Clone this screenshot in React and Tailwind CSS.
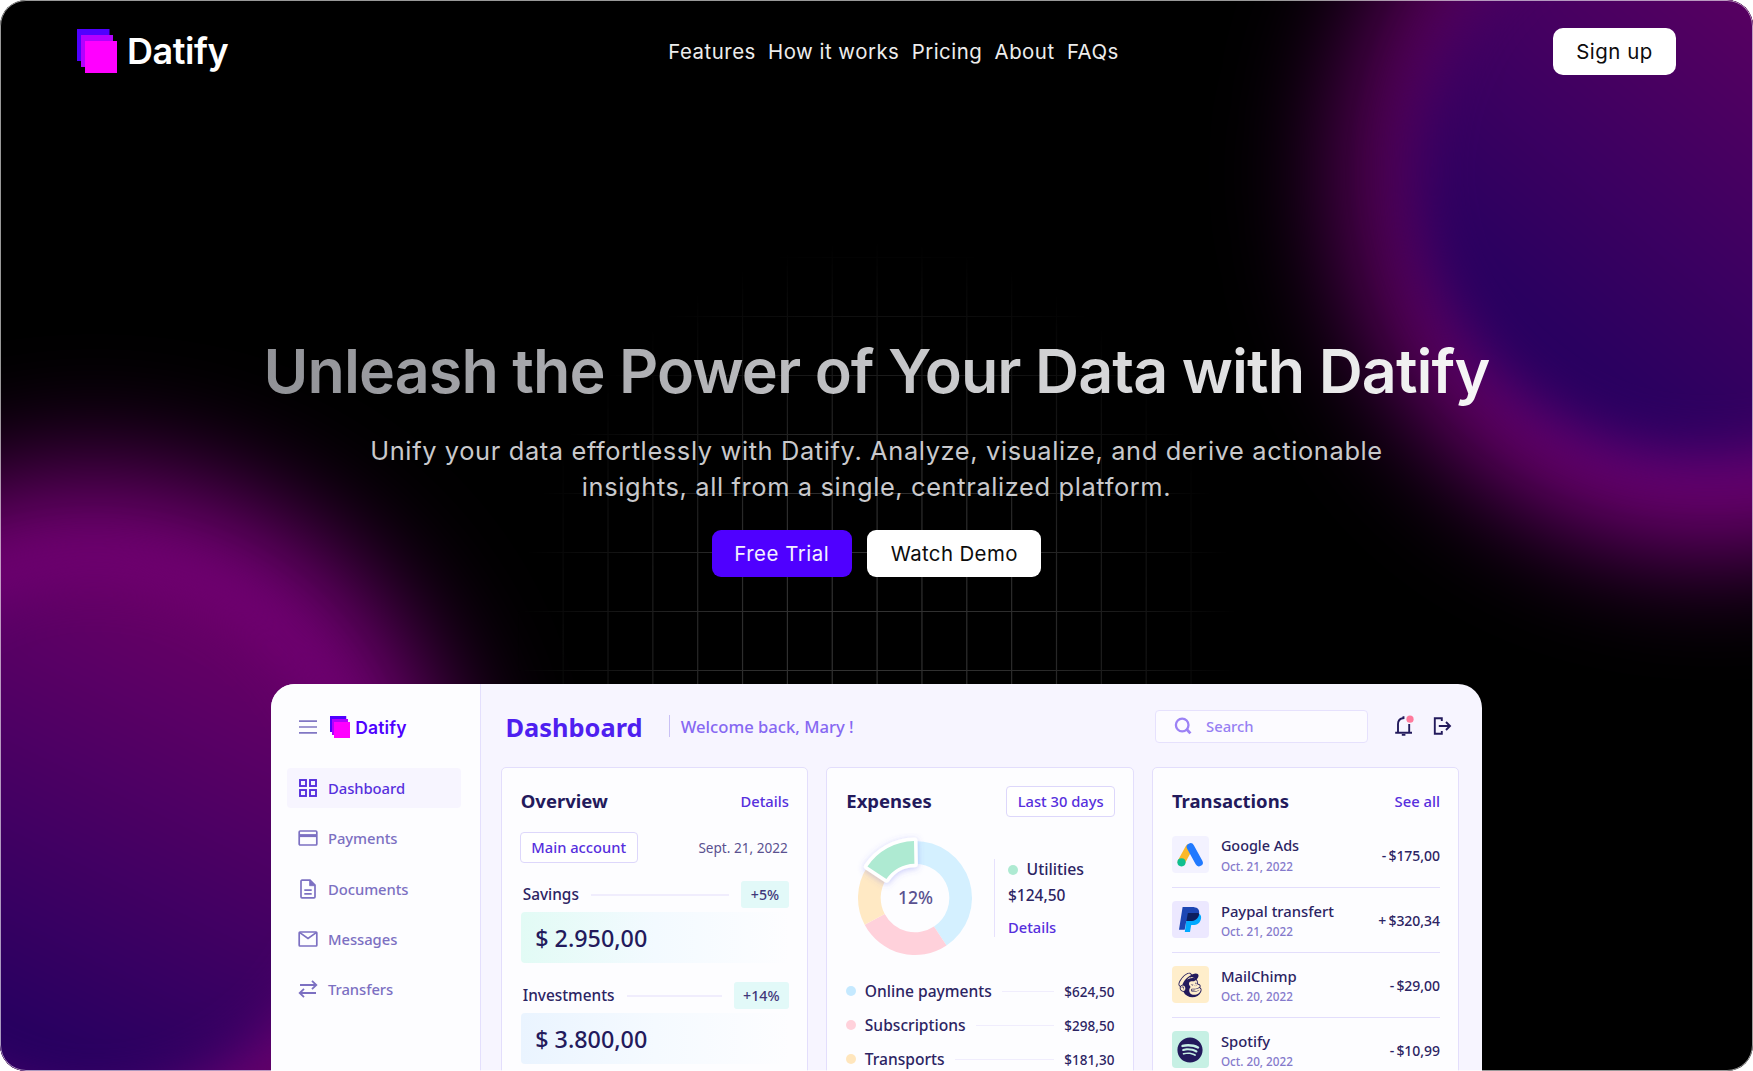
import React from "react";
import { FaMailchimp, FaSpotify } from "react-icons/fa";

const sans = "font-['Inter',sans-serif]";
const noto = "font-['Noto_Sans',sans-serif]";

function Logo({ small }) {
  return (
    <svg
      className={small ? "h-[22px] w-[20px] shrink-0" : "h-[44px] w-[40px] shrink-0"}
      viewBox="0 0 40 44"
    >
      <rect x="0" y="0" width="32.5" height="32" fill="#5000ff" />
      <rect x="4" y="6" width="32" height="32" fill="#b400ff" />
      <rect x="8" y="12" width="32" height="32" fill="#ff00ff" />
    </svg>
  );
}

function Glows() {
  return (
    <div className="pointer-events-none absolute inset-0 overflow-hidden">
      <div className="absolute left-[1332px] top-[-212px] h-[768px] w-[764px] rounded-full bg-linear-to-b from-[#580059] via-[#5c0060] via-60% to-[#7a0080] blur-[56px]" />
      <div className="absolute left-[1412px] top-[-114px] h-[572px] w-[590px] rounded-full bg-linear-[40deg] from-[#280060] from-22% to-[#640062] to-82% blur-[28px]" />
      <div className="absolute left-[-272px] top-[467px] h-[734px] w-[734px] rounded-full bg-[#760078] blur-[60px]" />
      <div className="absolute left-[-175px] top-[568px] h-[540px] w-[536px] rounded-full bg-linear-[26deg] from-[#240060] from-18% to-[#680066] to-85% blur-[28px]" />
    </div>
  );
}

const gridX = Array.from({ length: 17 }, (_, i) => 518.3 + i * 44.85);
const gridY = [257.5, 316.5, 375.5, 434.5, 493.5, 552.5, 611.5, 670.5];

function Grid() {
  return (
    <svg className="pointer-events-none absolute inset-0 h-full w-full" viewBox="0 0 1753 1071">
      <defs>
        <radialGradient id="gridFade" gradientUnits="userSpaceOnUse" cx="0" cy="0" r="1" gradientTransform="translate(877 640) scale(360 400)">
          <stop offset="0" stopColor="#fff" />
          <stop offset="0.45" stopColor="#fff" stopOpacity="0.85" />
          <stop offset="1" stopColor="#fff" stopOpacity="0" />
        </radialGradient>
        <mask id="gridMask">
          <rect width="1753" height="1071" fill="url(#gridFade)" />
        </mask>
      </defs>
      <g mask="url(#gridMask)" stroke="#333333" strokeWidth="1.2">
        {gridX.map((x) => (
          <line key={x} x1={x} x2={x} y1="230" y2="690" />
        ))}
        {gridY.map((y) => (
          <line key={y} y1={y} y2={y} x1="480" x2="1270" />
        ))}
      </g>
    </svg>
  );
}

function Header() {
  return (
    <header className="flex h-[75.3px] items-end pl-[77.3px] pr-[77px]">
      <div className="flex h-[47px] w-[591px] items-start pt-px">
        <Logo />
        <span className="ml-[9.800px] text-[36px] font-semibold leading-[44px] tracking-[-0.500px] text-white">
          Datify
        </span>
      </div>
      <nav className="flex h-[47px] items-center gap-[12.300px] whitespace-nowrap pt-px text-[20.400px] tracking-[0.500px] text-[#ededed]">
        <a>Features</a>
        <a>How it works</a>
        <a>Pricing</a>
        <a>About</a>
        <a>FAQs</a>
      </nav>
      <button className="ml-auto h-[47px] w-[123px] rounded-[10px] bg-white pt-px text-[20.400px] tracking-[0.550px] text-[#0c0c0c]">
        Sign up
      </button>
    </header>
  );
}

function Hero() {
  return (
    <section className="flex flex-col items-center whitespace-nowrap pt-[258.700px]">
      <h1 className="bg-linear-to-r from-[#919297] to-[#f7f7f7] bg-clip-text text-[61px] font-semibold leading-[74px] tracking-[-0.920px] text-transparent">
        Unleash the Power of Your Data with Datify
      </h1>
      <p className="mt-[25px] text-center text-[25.400px] leading-[36px] tracking-[0.630px] text-[#c9c9cc]">
        Unify your data effortlessly with Datify. Analyze, visualize, and derive actionable
        <br />
        insights, all from a single, centralized platform.
      </p>
      <div className="mt-[25px] flex gap-[15.500px] text-[20.400px]">
        <button className="h-[47px] w-[140px] rounded-[9px] bg-[#4f00ff] pt-px tracking-[0.550px] text-[#f4f0ff]">Free Trial</button>
        <button className="h-[47px] w-[174px] rounded-[9px] bg-white pt-px tracking-[0.400px] text-[#0c0c0c]">Watch Demo</button>
      </div>
    </section>
  );
}

const icons = {
  dashboard: (
    <g strokeWidth="1.9">
      <rect x="2" y="2" width="6" height="6" />
      <rect x="12" y="2" width="6" height="6" />
      <rect x="2" y="12" width="6" height="6" />
      <rect x="12" y="12" width="6" height="6" />
    </g>
  ),
  payments: (
    <g strokeWidth="1.7">
      <rect x="1.2" y="3" width="17.6" height="14" rx="1" />
      <path d="M1.2 7.6h17.6" strokeWidth="3" />
    </g>
  ),
  documents: (
    <g strokeWidth="1.7">
      <path d="M3 2.2a1 1 0 0 1 1-1h8l5 5v11.600a1 1 0 0 1-1 1H4a1 1 0 0 1-1-1z" />
      <path d="M11.600 1.500v5.200h5.200z" fill="currentColor" strokeWidth="0.8" />
      <path d="M6.300 11.200h7.400M6.300 14.800h7.400" />
    </g>
  ),
  messages: (
    <g strokeWidth="1.7">
      <rect x="1.2" y="3" width="17.6" height="14" rx="0.8" />
      <path d="M1.800 3.600 10 9.400l8.200-5.800" />
    </g>
  ),
  transfers: (
    <g strokeWidth="1.8">
      <path d="M2 6h16M14 1.800 18.300 6 14 10.200M18 14H2M6 9.800 1.700 14 6 18.200" />
    </g>
  ),
};

function NavItem({ icon, label, active }) {
  return (
    <div
      className={
        "flex h-[40.5px] w-[173.5px] items-center rounded-[4px] pl-[11px] text-[14.8px] font-medium " +
        (active ? "bg-[#f7f5ff] text-[#562fdd]" : "text-[#7c70c2]")
      }
    >
      <svg className="h-[20px] w-[20px]" viewBox="0 0 20 20" fill="none" stroke="currentColor">
        {icons[icon]}
      </svg>
      <span className="ml-[10px] tracking-[-0.060px]">{label}</span>
    </div>
  );
}

function Sidebar() {
  return (
    <aside className="w-[210px] shrink-0 border-r border-[#e4dffd] bg-[#fdfdff] pt-[29px]">
      <div className="flex h-[28px] items-center pl-[28px]">
        <svg className="h-[14px] w-[18px]" viewBox="0 0 18 14" stroke="#8177c4" strokeWidth="1.7">
          <path d="M0 1.200h18M0 7h18M0 12.800h18" />
        </svg>
        <div className="ml-[12.500px] flex items-center">
          <Logo small />
          <span className="ml-[5.800px] pt-px text-[17.500px] font-semibold tracking-[0.120px] text-[#4f00ff] font-['Inter',sans-serif]">
            Datify
          </span>
        </div>
      </div>
      <div className="ml-[16px] mt-[26.500px] flex flex-col gap-[9.800px]">
        <NavItem icon="dashboard" label="Dashboard" active />
        <NavItem icon="payments" label="Payments" />
        <NavItem icon="documents" label="Documents" />
        <NavItem icon="messages" label="Messages" />
        <NavItem icon="transfers" label="Transfers" />
      </div>
    </aside>
  );
}

function TopBar() {
  return (
    <div className="flex h-[36px] items-center pl-[24.500px] pr-[30px]">
      <h2 className="pt-[2px] text-[25.400px] font-bold leading-[30px] text-[#4f1ff0]">Dashboard</h2>
      <div className="ml-[26.500px] h-[22px] w-px bg-[#c9c0f5]" />
      <span className="ml-[10.700px] pt-[2px] text-[16.640px] font-medium text-[#8668f2]">Welcome back, Mary !</span>
      <div className="ml-auto flex h-[33px] w-[213px] items-center rounded-[4px] border border-[#e6e1fd] bg-[#fcfbff] pl-[18px]">
        <svg className="h-[18px] w-[18px]" viewBox="0 0 18 18" fill="none" stroke="#9c82f5" strokeWidth="2.300">
          <circle cx="8.200" cy="8" r="6.300" />
          <path d="M12.600 12.300 16.400 16.400" strokeWidth="2.800" />
        </svg>
        <span className="ml-[14.500px] pb-px text-[14.800px] font-medium text-[#9780f3]">Search</span>
      </div>
      <svg className="ml-[26px] h-[22px] w-[22px]" viewBox="0 0 22 22" fill="none" stroke="#231a5c" strokeWidth="1.900">
        <path d="M1.200 17.800h16.800" />
        <path d="M4 17.800V9.200c0-3.200 1.800-5.300 4.600-5.900l1.600-.3M9.500 3.900V1.200M15.200 17.800V9" />
        <path d="M7.800 19.900h3.600" />
        <circle cx="16" cy="4.200" r="3.600" fill="#ff7a9c" stroke="none" />
      </svg>
      <svg className="ml-[16.500px] h-[20px] w-[20px]" viewBox="0 0 20 20" fill="none" stroke="#231a5c" strokeWidth="1.900">
        <path d="M9.800 5V2.200h-7v15.600h7V15" />
        <path d="M6.800 10h11M14 6l4 4-4 4" />
      </svg>
    </div>
  );
}

function Card({ children }) {
  return (
    <div className="h-[400px] w-[307.600px] shrink-0 rounded-[5px] border border-[#e3defc] bg-[#fdfdff] pl-[19px] pr-[18.500px] pt-[17.500px]">
      {children}
    </div>
  );
}

function CardTitle({ children }) {
  return <h3 className="text-[18.500px] font-bold text-[#231a5c]">{children}</h3>;
}

function Outline({ children, className }) {
  return (
    <button
      className={
        "flex h-[31px] items-center justify-center rounded-[4px] border border-[#ddd7fb] bg-white text-[14.700px] font-medium text-[#562fdd] " +
        className
      }
    >
      {children}
    </button>
  );
}

function Balance({ label, badge, badgeClass, amount, boxClass, first }) {
  return (
    <div className={first ? "mt-[18.500px]" : "mt-[19px]"}>
      <div className="flex h-[27px] items-center">
        <span className="ml-[2px] text-[15.400px] font-medium text-[#2c2463]">{label}</span>
        <div className="mx-[12px] h-[1.500px] flex-1 bg-[#f0edfd]" />
        <span
          className={
            "flex h-[27px] items-center justify-center rounded-[3px] bg-[#e2f9f8] text-[14.200px] font-medium text-[#40377a] " +
            badgeClass
          }
        >
          {badge}
        </span>
      </div>
      <div
        className={
          "mt-[4px] flex h-[51px] items-center rounded-[4px] bg-linear-to-r to-transparent pl-[14.500px] pt-px text-[23.300px] font-medium text-[#231a5c] " +
          boxClass
        }
      >
        {amount}
      </div>
    </div>
  );
}

function Overview() {
  return (
    <Card>
      <div className="flex h-[31px] items-center justify-between">
        <CardTitle>Overview</CardTitle>
        <a className="text-[14.700px] font-medium text-[#562fdd]">Details</a>
      </div>
      <div className="mt-[15px] flex items-center justify-between">
        <Outline className="-ml-px w-[118px]">Main account</Outline>
        <span className="pr-px pt-px text-[13.600px] text-[#5a5190]">Sept. 21, 2022</span>
      </div>
      <Balance first label="Savings" badge="+5%" badgeClass="w-[47.500px]" amount="$ 2.950,00" boxClass="from-[#e2fbf5] via-[#f3faff]" />
      <Balance label="Investments" badge="+14%" badgeClass="w-[55px]" amount="$ 3.800,00" boxClass="from-[#eaf4ff] via-[#f5faff]" />
    </Card>
  );
}

const rad = (a) => ((a - 90) * Math.PI) / 180;
function arc(a0, a1, R = 57, r = 34.3) {
  const p = (q, a) => `${(q * Math.cos(rad(a))).toFixed(2)} ${(q * Math.sin(rad(a))).toFixed(2)}`;
  return `M${p(R, a0)}A${R} ${R} 0 0 1 ${p(R, a1)}L${p(r, a1)}A${r} ${r} 0 0 0 ${p(r, a0)}Z`;
}

function Donut() {
  return (
    <svg className="ml-[3.500px] h-[130px] w-[130px] shrink-0" viewBox="-65 -65 130 130">
      <defs>
        <filter id="lift" x="-30%" y="-30%" width="160%" height="160%">
          <feDropShadow dx="0" dy="1.500" stdDeviation="3" floodColor="#5a5cf0" floodOpacity="0.320" />
        </filter>
      </defs>
      <path d={arc(-1, 146.4)} fill="#d4f0ff" />
      <path d={arc(146.4, 242)} fill="#ffd1db" />
      <path d={arc(242, 303)} fill="#ffe9c4" />
      <g filter="url(#lift)">
        <path d={arc(303.500, 359)} fill="#fff" stroke="#fff" strokeWidth="7" strokeLinejoin="round" />
      </g>
      <path d={arc(303.500, 359)} fill="#aeead2" />
      <text x="0.500" y="6.300" textAnchor="middle" fontSize="17.600" fontWeight="500" fill="#5a5190">
        12%
      </text>
    </svg>
  );
}

const legend = [
  { dot: "bg-[#c5e9ff]", label: "Online payments", amount: "$624,50" },
  { dot: "bg-[#ffd1db]", label: "Subscriptions", amount: "$298,50" },
  { dot: "bg-[#ffe6bd]", label: "Transports", amount: "$181,30" },
];

function Expenses() {
  return (
    <Card>
      <div className="flex h-[31px] items-center justify-between">
        <CardTitle>Expenses</CardTitle>
        <Outline className="mr-[-1px] w-[109.500px]">Last 30 days</Outline>
      </div>
      <div className="mt-[16.300px] flex items-center">
        <Donut />
        <div className="ml-[14.500px] h-[78px] border-l-[1.500px] border-[#e6e1fd] pl-[12.700px] text-[#2c2463]">
          <div className="flex h-[21px] items-center text-[15.800px] font-medium">
            <i className="mr-[8.500px] h-[10px] w-[10px] rounded-full bg-[#aeead2]" />
            <span className="pt-px">Utilities</span>
          </div>
          <div className="mt-[6px] flex h-[20px] items-center text-[15.500px] font-medium">$124,50</div>
          <div className="mt-[11px] flex h-[20px] items-center text-[14.700px] font-medium text-[#562fdd]">Details</div>
        </div>
      </div>
      <div className="mt-[11.300px]">
        {legend.map((l) => (
          <div key={l.label} className="flex h-[34px] items-center font-medium text-[#2c2463]">
            <i className={"mr-[8.500px] h-[10px] w-[10px] rounded-full " + l.dot} />
            <span className="pt-px text-[15.600px]">{l.label}</span>
            <div className="mx-[10px] h-[1.500px] flex-1 bg-[#f0edfd]" />
            <span className="pt-px text-[13.500px]">{l.amount}</span>
          </div>
        ))}
      </div>
    </Card>
  );
}

const transactions = [
  {
    name: "Google Ads",
    nameClass: "text-[14.400px]",
    date: "Oct. 21, 2022",
    amount: "- $175,00",
    bg: "bg-[#f3f2ff]",
    icon: (
      <svg className="h-full w-full" viewBox="0 0 37 37" strokeLinecap="round" strokeWidth="7.600">
        <path d="M17 12 9.600 25.500" stroke="#fbb829" />
        <path d="M18.500 11 27 26.500" stroke="#2079ff" />
        <circle cx="9.500" cy="26.300" r="4.100" fill="#0fbf90" />
      </svg>
    ),
  },
  {
    name: "Paypal transfert",
    nameClass: "text-[14.800px]",
    date: "Oct. 21, 2022",
    amount: "+ $320,34",
    bg: "bg-[#ece8ff]",
    icon: (
      <svg className="h-full w-full" viewBox="0 0 37 37">
        <path d="M15.300 12h8c4.500 0 6.400 2.300 5.700 5.700-.9 4.300-3.700 6.300-8.200 6.300h-1.600L18 31h-5.200z" fill="#00a9ff" />
        <path d="M10.600 6h9.200c5 0 8.200 1.900 7.300 7-1 5-4.300 7-9.600 7h-3.200l-1.600 8.700H7z" fill="#1c46b4" />
        <path d="M15.900 11.900h8.500c1.100 0 2 .1 2.800.5-.9 5.500-4.300 7.600-9.700 7.600h-3.100z" fill="#0d1f5e" />
      </svg>
    ),
  },
  {
    name: "MailChimp",
    nameClass: "text-[14.800px]",
    date: "Oct. 20, 2022",
    amount: "- $29,00",
    bg: "bg-[#ffeecb]",
    icon: <FaMailchimp className="h-[28px] w-[28px] text-[#231a5c]" />,
  },
  {
    name: "Spotify",
    nameClass: "text-[14.800px]",
    date: "Oct. 20, 2022",
    amount: "- $10,99",
    bg: "bg-[#c6f0e4]",
    icon: <FaSpotify className="h-[26px] w-[26px] text-[#231a5c]" />,
  },
];

function Transactions() {
  return (
    <Card>
      <div className="flex h-[31px] items-center justify-between">
        <CardTitle>Transactions</CardTitle>
        <a className="text-[14.800px] font-medium text-[#562fdd]">See all</a>
      </div>
      <div className="mt-[6.200px]">
        {transactions.map((t) => (
          <div key={t.name} className="flex h-[65px] items-center border-b border-[#e3defc] text-[#2c2463]">
            <div className={"flex h-[37px] w-[37px] items-center justify-center rounded-[4px] " + t.bg}>{t.icon}</div>
            <div className="ml-[12px] pt-[3px]">
              <div className={"h-[20px] font-medium leading-[20px] " + t.nameClass}>{t.name}</div>
              <div className="h-[20px] text-[11.700px] font-medium leading-[21px] text-[#8479cb]">{t.date}</div>
            </div>
            <span className="ml-auto pt-px text-[14px] font-medium tracking-[-0.050px] [word-spacing:-1.300px]">{t.amount}</span>
          </div>
        ))}
      </div>
    </Card>
  );
}

function Dashboard() {
  return (
    <section className={"mx-auto mt-[107.300px] flex h-[388px] w-[1211px] shrink-0 overflow-hidden whitespace-nowrap rounded-t-[24px] bg-[#f7f5ff] " + noto}>
      <Sidebar />
      <main className="min-w-0 flex-1 pt-[24.200px]">
        <TopBar />
        <div className="flex gap-[18px] pl-[19.700px] pt-[22.800px]">
          <Overview />
          <Expenses />
          <Transactions />
        </div>
      </main>
    </section>
  );
}

export default function App() {
  return (
    <div className="h-[1071px] w-[1753px] overflow-hidden bg-white">
      <div className={"relative h-[1071px] w-[1753px] overflow-hidden rounded-[26px] bg-black " + sans}>
        <Glows />
        <Grid />
        <div className="relative">
          <Header />
          <Hero />
          <Dashboard />
        </div>
        <div className="pointer-events-none absolute inset-0 rounded-[26px] border border-white/60" />
      </div>
    </div>
  );
}
